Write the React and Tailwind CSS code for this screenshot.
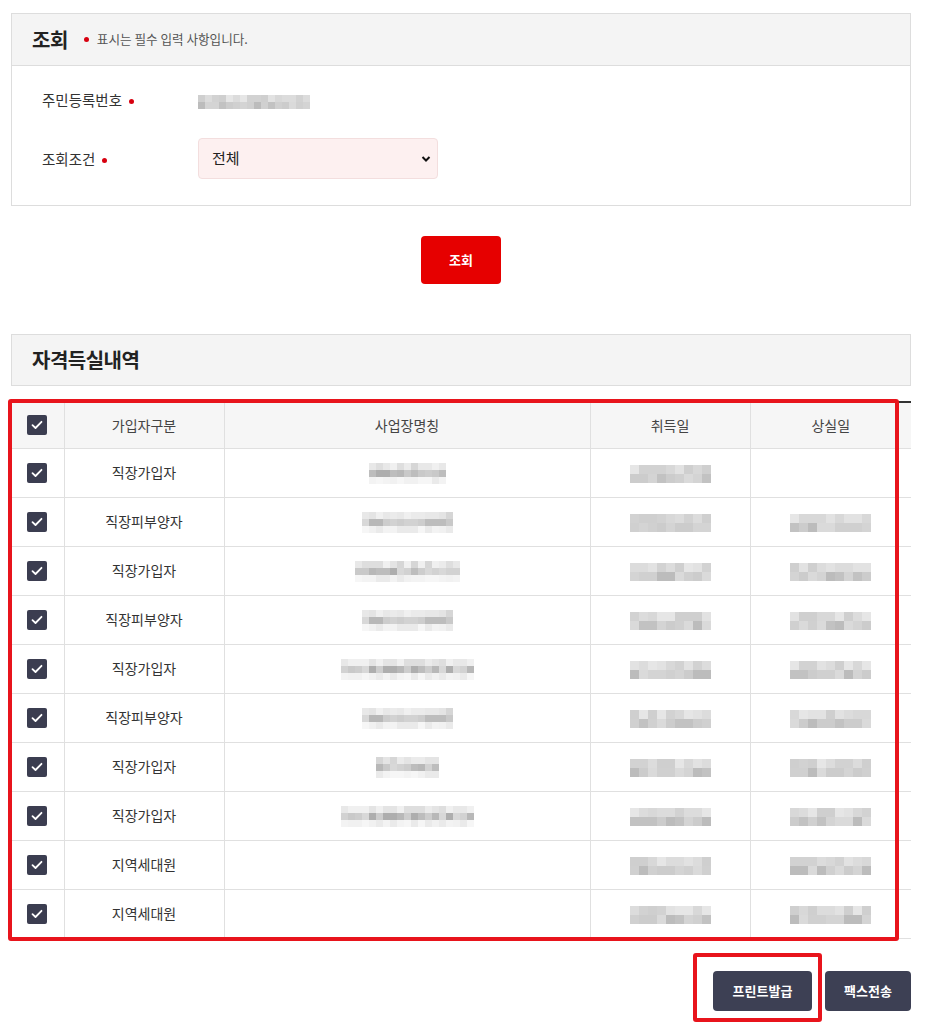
import React from "react";

const FONT = { fontFamily: '"Noto Sans CJK KR", "Noto Sans", sans-serif' };

function rnd(seed, i) {
  const x = Math.sin(seed * 97.13 + i * 12.9898) * 43758.5453;
  return x - Math.floor(x);
}

const ROWPAL = [
  ["#ebebeb", "#dedede", "#e4e4e4", "#f0f0f0", "#d6d6d6", "#e8e8e8"],
  ["#c9c9c9", "#bdbdbd", "#d2d2d2", "#b8b8b8", "#cdcdcd", "#aeaeae", "#d8d8d8"],
  ["#f1f1f1", "#f6f6f6", "#eaeaea", "#f3f3f3"],
];
const ROWPAL2 = [
  ["#dcdcdc", "#d2d2d2", "#e2e2e2", "#d8d8d8", "#cfcfcf", "#e6e6e6"],
  ["#cccccc", "#c2c2c2", "#d4d4d4", "#bcbcbc", "#d0d0d0", "#dadada"],
];

function Pix({ cols, seed, size = 7, three = true }) {
  const pal = three ? ROWPAL : ROWPAL2;
  return (
    <div className="inline-flex flex-col align-middle">
      {pal.map((p, r) => (
        <div key={r} className="flex">
          {Array.from({ length: cols }).map((_, c) => (
            <div
              key={c}
              style={{
                width: size,
                height: size,
                background: p[Math.floor(rnd(seed + r * 3, c) * p.length)],
              }}
            />
          ))}
        </div>
      ))}
    </div>
  );
}

function Dot() {
  return <span className="inline-block w-[5px] h-[5px] rounded-full bg-[#d7000f]" />;
}

function Check() {
  return (
    <div className="w-[20px] h-[20px] bg-[#3b3d50] rounded-[2px] flex items-center justify-center mx-auto">
      <svg width="12" height="10" viewBox="0 0 12 10" fill="none">
        <polyline points="1.5,5.2 4.5,8 10.5,1.8" stroke="#fff" strokeWidth="1.8" strokeLinecap="round" strokeLinejoin="round" />
      </svg>
    </div>
  );
}

const rows = [
  { type: "직장가입자", biz: 11, bizSeed: 1, acq: 3, loss: false },
  { type: "직장피부양자", biz: 13, bizSeed: 2, acq: 4, loss: 5 },
  { type: "직장가입자", biz: 15, bizSeed: 3, acq: 6, loss: 7 },
  { type: "직장피부양자", biz: 13, bizSeed: 2, acq: 8, loss: 9 },
  { type: "직장가입자", biz: 19, bizSeed: 5, acq: 10, loss: 11 },
  { type: "직장피부양자", biz: 13, bizSeed: 2, acq: 12, loss: 13 },
  { type: "직장가입자", biz: 9, bizSeed: 7, acq: 14, loss: 15 },
  { type: "직장가입자", biz: 19, bizSeed: 5, acq: 16, loss: 17 },
  { type: "지역세대원", biz: 0, bizSeed: 0, acq: 18, loss: 19 },
  { type: "지역세대원", biz: 0, bizSeed: 0, acq: 20, loss: 21 },
];

export default function App() {
  return (
    <div style={FONT} className="w-[926px] min-h-[1026px] bg-white text-[#333]">
      <div className="w-[900px] ml-[11px] pt-[13px]">
        {/* 조회 box */}
        <div className="border border-[#dddddd]">
          <div className="h-[52px] bg-[#f4f4f4] border-b border-[#dddddd] flex items-center pl-[20px]">
            <span className="text-[20px] font-bold text-[#222] tracking-[-0.5px]">조회</span>
            <span className="ml-[16px] mr-[8px] inline-block w-[5px] h-[5px] rounded-full bg-[#d7000f]" />
            <span className="text-[12.6px] text-[#555]">표시는 필수 입력 사항입니다.</span>
          </div>
          <div className="pt-[13px] pb-[26px] pl-[30px]">
            <div className="h-[41px] flex items-center">
              <div className="w-[156px] flex items-center text-[14.5px] text-[#333]">
                <span>주민등록번호</span>
                <span className="ml-[7px] -mt-[4px]"><Dot /></span>
              </div>
              <div className="ml-[0px]">
                <Pix cols={16} seed={40} size={7} three={false} />
              </div>
            </div>
            <div className="h-[41px] mt-[18px] flex items-center">
              <div className="w-[156px] flex items-center text-[14.5px] text-[#333]">
                <span>조회조건</span>
                <span className="ml-[7px] -mt-[4px]"><Dot /></span>
              </div>
              <div className="w-[240px] h-[41px] bg-[#fdf0f0] border border-[#f3dede] rounded-[4px] flex items-center justify-between pl-[13px] pr-[6px]">
                <span className="text-[15px] text-[#222]">전체</span>
                <svg width="10" height="8" viewBox="0 0 10 8">
                  <polyline points="1.5,2 5,5.5 8.5,2" fill="none" stroke="#111" strokeWidth="2" />
                </svg>
              </div>
            </div>
          </div>
        </div>

        {/* 조회 button */}
        <div className="flex justify-center mt-[30px]">
          <button className="w-[80px] h-[48px] bg-[#e60000] rounded-[4px] text-white text-[13px] font-bold">
            조회
          </button>
        </div>

        {/* section header */}
        <div className="mt-[50px] h-[52px] bg-[#f4f4f4] border border-[#dddddd] flex items-center pl-[20px]">
          <span className="text-[20px] font-bold text-[#222] tracking-[-0.5px]">자격득실내역</span>
        </div>

        {/* table */}
        <div className="relative mt-[15px]">
          <table className="w-[900px] border-collapse table-fixed border-t-2 border-t-[#333] border-b border-b-[#ccc]">
            <colgroup>
              <col style={{ width: 53 }} />
              <col style={{ width: 160 }} />
              <col style={{ width: 366 }} />
              <col style={{ width: 160 }} />
              <col style={{ width: 161 }} />
            </colgroup>
            <thead>
              <tr className="h-[46px] bg-[#f6f6f6] text-[14px] text-[#444]">
                <th className="font-normal border-b border-[#e0e0e0]"><Check /></th>
                <th className="font-normal border-l border-b border-[#e0e0e0]">가입자구분</th>
                <th className="font-normal border-l border-b border-[#e0e0e0]">사업장명칭</th>
                <th className="font-normal border-l border-b border-[#e0e0e0]">취득일</th>
                <th className="font-normal border-l border-b border-[#e0e0e0]">상실일</th>
              </tr>
            </thead>
            <tbody>
              {rows.map((r, i) => (
                <tr key={i} className="h-[49px] text-[14px] text-[#333]">
                  <td className="border-b border-[#e0e0e0]"><Check /></td>
                  <td className="border-l border-b border-[#e0e0e0] text-center">{r.type}</td>
                  <td className="border-l border-b border-[#e0e0e0] text-center">
                    {r.biz ? <Pix cols={r.biz} seed={r.bizSeed} size={7} /> : null}
                  </td>
                  <td className="border-l border-b border-[#e0e0e0] text-center">
                    <Pix cols={9} seed={r.acq} size={9} three={false} />
                  </td>
                  <td className="border-l border-b border-[#e0e0e0] text-center">
                    {r.loss ? <Pix cols={9} seed={r.loss} size={9} three={false} /> : null}
                  </td>
                </tr>
              ))}
            </tbody>
          </table>
          <div className="absolute left-[-3px] top-[-2px] w-[891px] h-[542px] border-[4px] border-[#e8141c] rounded-[3px] pointer-events-none" />
        </div>

        {/* bottom buttons */}
        <div className="flex justify-end gap-[13px] mt-[32px]">
          <div className="relative">
            <button className="w-[99px] h-[40px] bg-[#3d4054] rounded-[4px] text-white text-[13px] font-bold">
              프린트발급
            </button>
            <div className="absolute left-[-20px] top-[-18px] w-[129px] h-[69px] border-[4px] border-[#e8141c] rounded-[3px] pointer-events-none" />
          </div>
          <button className="w-[86px] h-[40px] bg-[#3d4054] rounded-[4px] text-white text-[13px] font-bold">
            팩스전송
          </button>
        </div>
      </div>
    </div>
  );
}
